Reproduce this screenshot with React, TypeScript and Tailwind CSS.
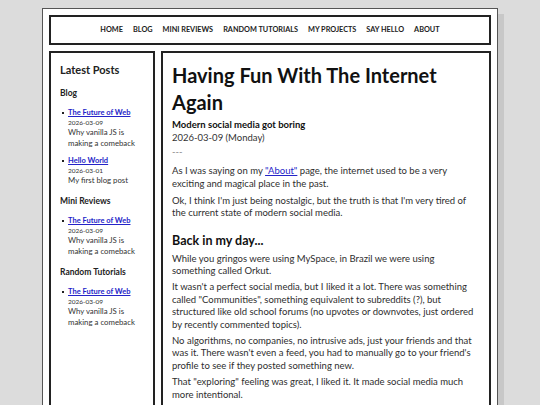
import React from 'react';

const navItems = ['Home', 'Blog', 'Mini Reviews', 'Random Tutorials', 'My Projects', 'Say Hello', 'About'];

type Post = { title: string; date: string; desc: string };

const sections: { name: string; posts: Post[] }[] = [
  {
    name: 'Blog',
    posts: [
      { title: 'The Future of Web', date: '2026-03-09', desc: 'Why vanilla JS is making a comeback' },
      { title: 'Hello World', date: '2026-03-01', desc: 'My first blog post' },
    ],
  },
  {
    name: 'Mini Reviews',
    posts: [{ title: 'The Future of Web', date: '2026-03-09', desc: 'Why vanilla JS is making a comeback' }],
  },
  {
    name: 'Random Tutorials',
    posts: [{ title: 'The Future of Web', date: '2026-03-09', desc: 'Why vanilla JS is making a comeback' }],
  },
];

const Sidebar = () => (
  <aside className="w-[106px] shrink-0 border-2 border-[#222] bg-white px-[9px] pt-[9px] text-[#222]">
    <h2 className="text-[11px] leading-[16px] font-bold">Latest Posts</h2>
    {sections.map(section => (
      <div key={section.name}>
        <h3 className="mt-[10px] text-[8.5px] leading-[11px] font-bold">{section.name}</h3>
        <ul className="mt-[9px] flex flex-col gap-[7px]">
          {section.posts.map((post, i) => (
            <li key={i} className="flex gap-[4px]">
              <span className="mt-[4px] ml-[2px] h-[2px] w-[2px] shrink-0 bg-[#222]" />
              <div>
                <a href="#" className="block text-[7.5px] leading-[10px] font-bold text-[#2424c8] underline">
                  {post.title}
                </a>
                <p className="text-[6.5px] leading-[9px] text-[#333]">{post.date}</p>
                <p className="text-[7.8px] leading-[11px] text-[#333]">{post.desc}</p>
              </div>
            </li>
          ))}
        </ul>
      </div>
    ))}
  </aside>
);

const Article = () => (
  <main className="min-w-0 flex-1 border-2 border-[#222] bg-white px-[9px] pt-[9px] pb-4 text-[9.5px] leading-[12.4px] text-[#2e2e2e]">
    <h1 className="text-[20px] leading-[26.6px] font-bold text-[#111]">Having Fun With The Internet Again</h1>
    <p className="mt-[4px] font-bold text-[#111]">Modern social media got boring</p>
    <p className="text-[#333]">2026-03-09 (Monday)</p>
    <p className="mt-[2px] text-[#888]">---</p>

    <p className="mt-[7px]">
      As I was saying on my{' '}
      <a href="#" className="text-[#2424c8] underline">"About"</a> page, the internet used to be a very exciting and
      magical place in the past.
    </p>
    <p className="mt-[4.5px]">
      Ok, I think I'm just being nostalgic, but the truth is that I'm very tired of the current state of modern social
      media.
    </p>

    <h2 className="mt-[12px] text-[12.5px] leading-[17px] font-bold text-[#111]">Back in my day...</h2>
    <p className="mt-[4px]">While you gringos were using MySpace, in Brazil we were using something called Orkut.</p>
    <p className="mt-[4px]">
      It wasn't a perfect social media, but I liked it a lot. There was something called "Communities", something
      equivalent to subreddits (?), but structured like old school forums (no upvotes or downvotes, just ordered by
      recently commented topics).
    </p>
    <p className="mt-[4px]">
      No algorithms, no companies, no intrusive ads, just your friends and that was it. There wasn't even a feed, you
      had to manually go to your friend's profile to see if they posted something new.
    </p>
    <p className="mt-[4px]">
      That "exploring" feeling was great, I liked it. It made social media much more intentional.
    </p>
    <p className="mt-[4px]">
      Today everything is a feed, and every feed is the same. I miss the weird corners of the web.
    </p>
  </main>
);

export default function App() {
  return (
    <div className="min-h-screen bg-[#dcdcdc] pt-[8px] font-['Lato',sans-serif]">
      <div className="mx-auto w-[456px] border border-[#555] bg-white p-[6px] shadow-[6px_6px_0_#c8c8c8]">
        <nav className="flex h-[30px] items-center justify-center gap-[10px] border-2 border-[#222] text-[7.3px] font-bold uppercase text-[#222]">
          {navItems.map(item => (
            <a key={item} href="#">
              {item}
            </a>
          ))}
        </nav>
        <div className="mt-[6px] flex gap-[6px]">
          <Sidebar />
          <Article />
        </div>
      </div>
    </div>
  );
}
